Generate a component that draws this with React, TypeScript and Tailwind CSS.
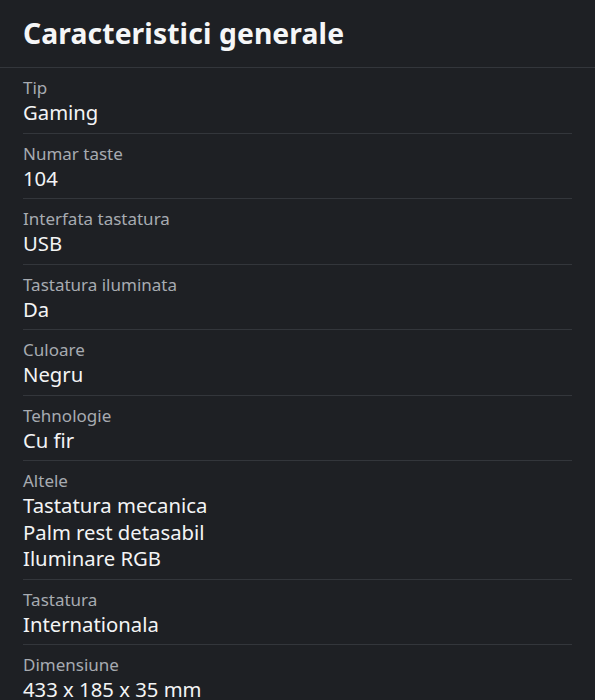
import React from 'react';

const specs: { label: string; values: string[] }[] = [
  { label: 'Tip', values: ['Gaming'] },
  { label: 'Numar taste', values: ['104'] },
  { label: 'Interfata tastatura', values: ['USB'] },
  { label: 'Tastatura iluminata', values: ['Da'] },
  { label: 'Culoare', values: ['Negru'] },
  { label: 'Tehnologie', values: ['Cu fir'] },
  { label: 'Altele', values: ['Tastatura mecanica', 'Palm rest detasabil', 'Iluminare RGB'] },
  { label: 'Tastatura', values: ['Internationala'] },
  { label: 'Dimensiune', values: ['433 x 185 x 35 mm'] },
];

export default function App() {
  return (
    <div
      className="w-[595px] h-[700px] overflow-hidden bg-[#1e2024] text-white"
      style={{ fontFamily: '"Noto Sans", "Open Sans", sans-serif' }}
    >
      {/* Header */}
      <div className="h-[68px] flex items-center px-[23px] border-b border-[#33363b]">
        <h2 className="text-[28.3px] font-bold leading-none tracking-[0.1px] text-[#f5f6f7]">
          Caracteristici generale
        </h2>
      </div>

      {/* Spec rows */}
      <div className="px-[23px]">
        {specs.map((s) => (
          <div key={s.label} className="pt-[9px] pb-[7px] border-b border-[#33363b]">
            <div className="text-[17px] leading-[21px] text-[#a7abb1]">{s.label}</div>
            <div className="mt-[1px]">
              {s.values.map((v) => (
                <div key={v} className="text-[20.3px] leading-[26.5px] text-[#f3f4f5]">
                  {v}
                </div>
              ))}
            </div>
          </div>
        ))}
      </div>
    </div>
  );
}
